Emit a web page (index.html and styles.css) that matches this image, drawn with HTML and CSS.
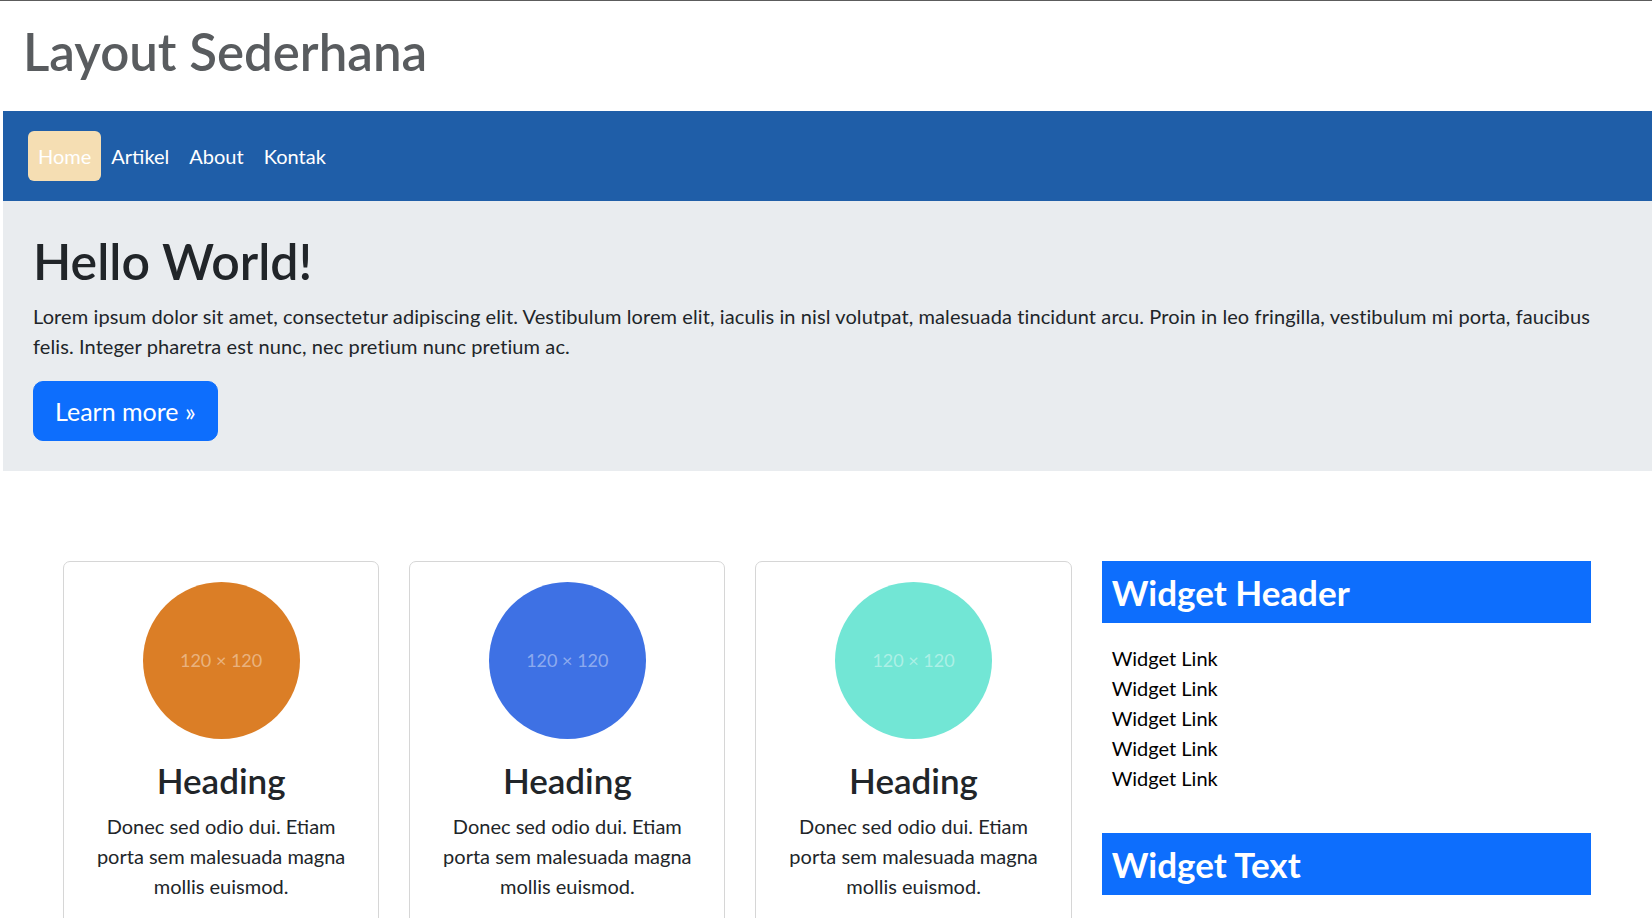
FILE: index.html
```html
<!DOCTYPE html>
<html lang="id">
<head>
<meta charset="utf-8">
<title>Layout Sederhana</title>
<link rel="stylesheet" href="styles.css">
</head>
<body>
<div class="page">
  <header class="site-header">
    <h1 class="site-title">Layout Sederhana</h1>
  </header>
  <nav class="navbar">
    <ul class="nav">
      <li><a class="nav-link active" href="#">Home</a></li>
      <li><a class="nav-link" href="#">Artikel</a></li>
      <li><a class="nav-link" href="#">About</a></li>
      <li><a class="nav-link" href="#">Kontak</a></li>
    </ul>
  </nav>
  <section class="hero">
    <h1 class="hero-title">Hello World!</h1>
    <p class="hero-text">Lorem ipsum dolor sit amet, consectetur adipiscing elit. Vestibulum lorem elit, iaculis in nisl volutpat, malesuada tincidunt arcu. Proin in leo fringilla, vestibulum mi porta, faucibus felis. Integer pharetra est nunc, nec pretium nunc pretium ac.</p>
    <a class="btn-primary" href="#">Learn more »</a>
  </section>
  <main class="content">
    <div class="cards">
      <article class="card">
        <div class="thumb thumb-orange"><span>120 × 120</span></div>
        <h2 class="card-title">Heading</h2>
        <p class="card-text">Donec sed odio dui. Etiam porta sem malesuada magna mollis euismod.</p>
      </article>
      <article class="card">
        <div class="thumb thumb-blue"><span>120 × 120</span></div>
        <h2 class="card-title">Heading</h2>
        <p class="card-text">Donec sed odio dui. Etiam porta sem malesuada magna mollis euismod.</p>
      </article>
      <article class="card">
        <div class="thumb thumb-teal"><span>120 × 120</span></div>
        <h2 class="card-title">Heading</h2>
        <p class="card-text">Donec sed odio dui. Etiam porta sem malesuada magna mollis euismod.</p>
      </article>
    </div>
    <aside class="sidebar">
      <h3 class="widget-header">Widget Header</h3>
      <ul class="widget-links">
        <li><a href="#">Widget Link</a></li>
        <li><a href="#">Widget Link</a></li>
        <li><a href="#">Widget Link</a></li>
        <li><a href="#">Widget Link</a></li>
        <li><a href="#">Widget Link</a></li>
      </ul>
      <h3 class="widget-header">Widget Text</h3>
    </aside>
  </main>
</div>
</body>
</html>
```
FILE: styles.css
```css
* { box-sizing: border-box; }

body {
  margin: 0;
  border-top: 1px solid #5c5c5c;
  font-family: "Lato", "Liberation Sans", sans-serif;
  font-size: 20px;
  line-height: 1.5;
  color: #212529;
  background: #fff;
}

.page {
  padding-left: 3px;
}

.site-header {
  padding: 20px 0 28.8px 20px;
}

.site-title {
  margin: 0;
  font-size: 51px;
  font-weight: 600;
  line-height: 1.2;
  color: #595c5f;
}

.navbar {
  background: #1f5ea8;
  padding: 20px 25px;
}

.nav {
  list-style: none;
  margin: 0;
  padding: 0;
  display: flex;
}

.nav-link {
  display: block;
  padding: 10px;
  color: #fff;
  text-decoration: none;
  line-height: 30px;
  border-radius: 6px;
}

.nav-link.active {
  background: #f5deb3;
}

.hero {
  background: #e9ecef;
  padding: 30px;
}

.hero-title {
  margin: 0 0 10px;
  font-size: 50px;
  font-weight: 600;
  line-height: 1.2;
}

.hero-text {
  margin: 0 0 20px;
  letter-spacing: 0.1px;
}

.btn-primary {
  display: inline-block;
  background: #0d6efd;
  border: 1px solid #0d6efd;
  color: #fff;
  font-size: 25px;
  line-height: 38px;
  padding: 10px 21px;
  border-radius: 10px;
  text-decoration: none;
}

.content {
  display: flex;
  gap: 30px;
  padding: 90px 61px 0 60px;
}

.cards {
  flex: 0 0 calc(66.6667% - 10px);
  display: grid;
  grid-template-columns: repeat(3, 1fr);
  gap: 30px;
  align-items: start;
}

.card {
  border: 1px solid #d6d6d6;
  border-radius: 7px;
  padding: 20px 20px 60px;
  text-align: center;
}

.thumb {
  width: 157px;
  height: 157px;
  border-radius: 50%;
  margin: 0 auto 20px;
  display: flex;
  align-items: center;
  justify-content: center;
}

.thumb span {
  font-size: 18px;
  color: rgba(255, 255, 255, 0.42);
}

.thumb-orange { background: #db7e26; }
.thumb-blue { background: #3e71e4; }
.thumb-teal { background: #72e6d5; }

.card-title {
  margin: 0 0 10px;
  font-size: 35px;
  font-weight: 600;
  line-height: 1.2;
}

.card-text {
  margin: 0;
}

.sidebar {
  flex: 1;
}

.widget-header {
  margin: 0;
  background: #0d6efd;
  color: #fff;
  font-size: 35px;
  font-weight: 700;
  line-height: 1.2;
  padding: 10px;
}

.widget-links {
  list-style: none;
  margin: 20px 0 40px;
  padding: 0 0 0 10px;
}

.widget-links a {
  color: #000;
  text-decoration: none;
}
```
